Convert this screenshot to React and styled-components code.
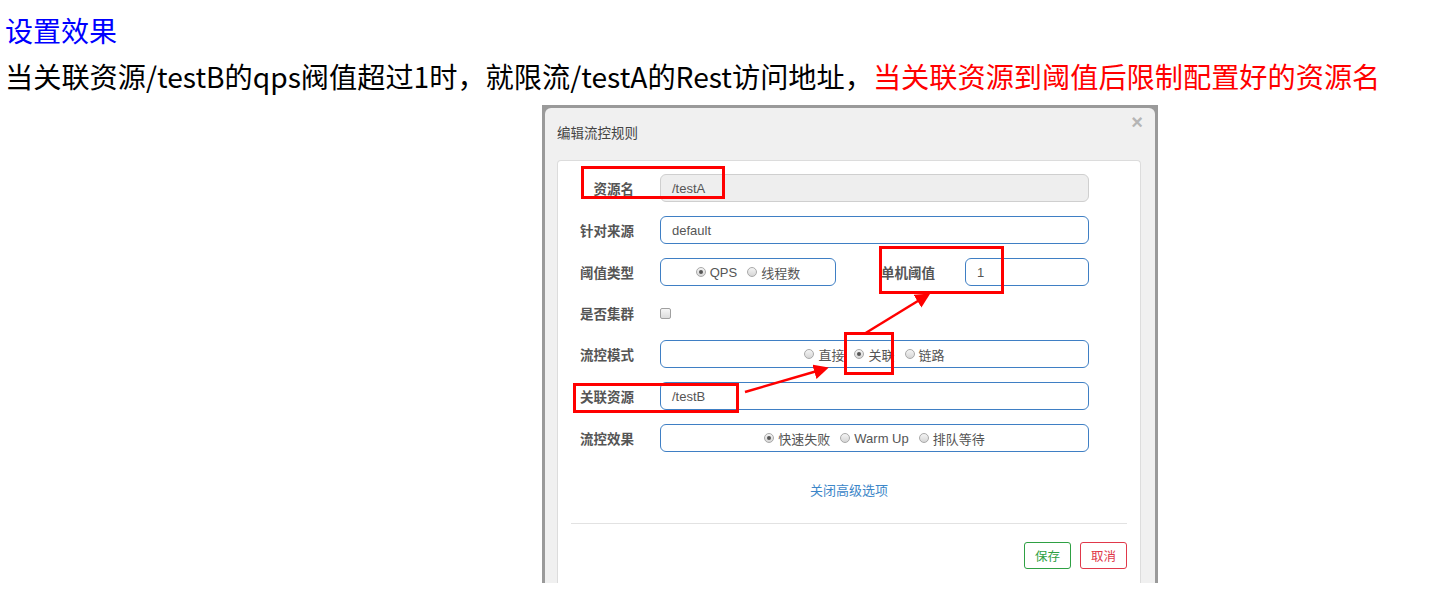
import React from "react";
import styled, { createGlobalStyle } from "styled-components";

const GlobalStyle = createGlobalStyle`
  html, body {
    margin: 0;
    padding: 0;
    background: #fff;
  }
  body {
    font-family: "Noto Sans CJK SC", "Noto Sans", sans-serif;
  }
`;

const Page = styled.div`
  position: relative;
  width: 1446px;
  height: 606px;
  padding: 7px 0 0 5px;
  box-sizing: border-box;
  overflow: hidden;
`;

const Heading = styled.div`
  font-size: 28px;
  line-height: 46px;
  color: #0000ff;
`;

const Lead = styled.div`
  font-size: 28.2px;
  line-height: 46px;
  color: #000;
  white-space: nowrap;
`;

const Highlight = styled.span`
  color: #ff0000;
`;

const Shot = styled.div`
  margin: 6px 0 0 537px;
  width: 616px;
  height: 478px;
  box-sizing: border-box;
  background: #9a9a9a;
  padding: 3px 3px 0 3px;
  display: flex;
`;

const Modal = styled.div`
  flex: 1;
  background: #f0f0f0;
  border-radius: 6px 6px 0 0;
  display: flex;
  flex-direction: column;
  font-family: "Liberation Sans", "Noto Sans CJK SC", sans-serif;
`;

const ModalHeader = styled.div`
  height: 52px;
  display: flex;
  align-items: flex-start;
  justify-content: space-between;
  padding: 0 12px 0 12px;
  box-sizing: border-box;
`;

const ModalTitle = styled.div`
  margin-top: 14px;
  font-size: 13.5px;
  color: #444;
  font-family: "Noto Sans CJK SC", sans-serif;
`;

const Close = styled.div`
  margin-top: 4px;
  font-size: 20px;
  line-height: 20px;
  color: #b5b5b5;
  font-weight: 700;
`;

const Card = styled.div`
  flex: 1;
  margin: 0 14px 0 12px;
  background: #fff;
  border: 1px solid #dcdcdc;
  border-bottom: none;
  border-radius: 4px 4px 0 0;
  padding-top: 13px;
  display: flex;
  flex-direction: column;
`;

const Row = styled.div`
  display: flex;
  align-items: center;
  height: ${(p) => (p.$short ? "26px" : "28px")};
  margin-bottom: 14px;
`;

const Label = styled.div`
  width: ${(p) => p.$width || "76px"};
  margin-left: ${(p) => p.$offset || "0"};
  margin-right: 26px;
  text-align: ${(p) => p.$align || "right"};
  font-size: 13.5px;
  font-weight: 700;
  color: #555;
  font-family: "Noto Sans CJK SC", sans-serif;
  white-space: nowrap;
`;

const Field = styled.div`
  width: ${(p) => p.$width || "429px"};
  height: 28px;
  box-sizing: border-box;
  border: 1px solid ${(p) => (p.$disabled ? "#cfcfcf" : "#3f7fc4")};
  background: ${(p) => (p.$disabled ? "#eeeeee" : "#fff")};
  border-radius: 6px;
  display: flex;
  align-items: center;
  justify-content: ${(p) => (p.$center ? "center" : "flex-start")};
  padding: 0 11px;
  font-size: 13px;
  color: #555;
  gap: 10px;
`;

const RadioItem = styled.span`
  display: inline-flex;
  align-items: center;
  gap: 4px;
  font-size: 13px;
  color: #555;
  font-family: "Liberation Sans", "Noto Sans CJK SC", sans-serif;
`;

const RadioDot = styled.span`
  width: 10px;
  height: 10px;
  box-sizing: border-box;
  border-radius: 50%;
  border: 1px solid #a9a9a9;
  background: linear-gradient(#f4f4f4, #d6d6d6);
  display: inline-flex;
  align-items: center;
  justify-content: center;
  &::after {
    content: "";
    width: 4px;
    height: 4px;
    border-radius: 50%;
    background: ${(p) => (p.$on ? "#555" : "transparent")};
  }
`;

const Check = styled.span`
  width: 9px;
  height: 9px;
  border: 1px solid #a0a0a0;
  border-radius: 2px;
  background: linear-gradient(#f6f6f6, #dcdcdc);
`;

const ToggleLink = styled.div`
  margin-top: 14px;
  height: 20px;
  text-align: center;
  font-size: 13px;
  color: #3c86c8;
  font-family: "Noto Sans CJK SC", sans-serif;
  line-height: 20px;
`;

const Divider = styled.div`
  margin: 23px 13px 0;
  height: 1px;
  background: #e2e2e2;
`;

const Footer = styled.div`
  display: flex;
  justify-content: flex-end;
  gap: 9px;
  margin: 18px 13px 0;
`;

const Btn = styled.div`
  width: 47px;
  height: 27px;
  box-sizing: border-box;
  border: 1px solid ${(p) => p.$color};
  color: ${(p) => p.$color};
  border-radius: 3px;
  display: flex;
  align-items: center;
  justify-content: center;
  font-size: 12.5px;
  font-family: "Noto Sans CJK SC", sans-serif;
`;

const Marks = styled.svg`
  position: absolute;
  left: 0;
  top: 0;
  pointer-events: none;
`;

const Radio = ({ on, children }) => (
  <RadioItem>
    <RadioDot $on={on} />
    {children}
  </RadioItem>
);

const Annotations = () => (
  <Marks width="1446" height="606" viewBox="0 0 1446 606">
    <defs>
      <marker id="head" markerWidth="6" markerHeight="6" refX="4" refY="3" orient="auto">
        <path d="M0,0 L6,3 L0,6 z" fill="#ff0000" />
      </marker>
    </defs>
    <g fill="none" stroke="#ff0000" strokeWidth="3">
      <rect x="582.5" y="167.5" width="141" height="30" />
      <rect x="880.5" y="247.5" width="122" height="45" />
      <rect x="845.5" y="333.5" width="47" height="40" />
      <rect x="574.5" y="384.5" width="163" height="27" />
      <line x1="745" y1="392" x2="824" y2="369" strokeWidth="2.5" markerEnd="url(#head)" />
      <line x1="864" y1="334" x2="926" y2="296" strokeWidth="2.5" markerEnd="url(#head)" />
    </g>
  </Marks>
);

export default function App() {
  return (
    <>
      <GlobalStyle />
      <Page>
        <Heading>设置效果</Heading>
        <Lead>
          当关联资源/testB的qps阀值超过1时，就限流/testA的Rest访问地址，
          <Highlight>当关联资源到阈值后限制配置好的资源名</Highlight>
        </Lead>
        <Shot>
          <Modal>
            <ModalHeader>
              <ModalTitle>编辑流控规则</ModalTitle>
              <Close>×</Close>
            </ModalHeader>
            <Card>
              <Row>
                <Label>资源名</Label>
                <Field $disabled>/testA</Field>
              </Row>
              <Row>
                <Label>针对来源</Label>
                <Field>default</Field>
              </Row>
              <Row>
                <Label>阈值类型</Label>
                <Field $width="176px" $center>
                  <Radio on>QPS</Radio>
                  <Radio>线程数</Radio>
                </Field>
                <Label $width="58px" $align="left" $offset="45px">
                  单机阈值
                </Label>
                <Field $width="124px">1</Field>
              </Row>
              <Row $short>
                <Label>是否集群</Label>
                <Check />
              </Row>
              <Row>
                <Label>流控模式</Label>
                <Field $center>
                  <Radio>直接</Radio>
                  <Radio on>关联</Radio>
                  <Radio>链路</Radio>
                </Field>
              </Row>
              <Row>
                <Label>关联资源</Label>
                <Field>/testB</Field>
              </Row>
              <Row>
                <Label>流控效果</Label>
                <Field $center>
                  <Radio on>快速失败</Radio>
                  <Radio>Warm Up</Radio>
                  <Radio>排队等待</Radio>
                </Field>
              </Row>
              <ToggleLink>关闭高级选项</ToggleLink>
              <Divider />
              <Footer>
                <Btn $color="#2ea043">保存</Btn>
                <Btn $color="#e0384a">取消</Btn>
              </Footer>
            </Card>
          </Modal>
        </Shot>
        <Annotations />
      </Page>
    </>
  );
}
